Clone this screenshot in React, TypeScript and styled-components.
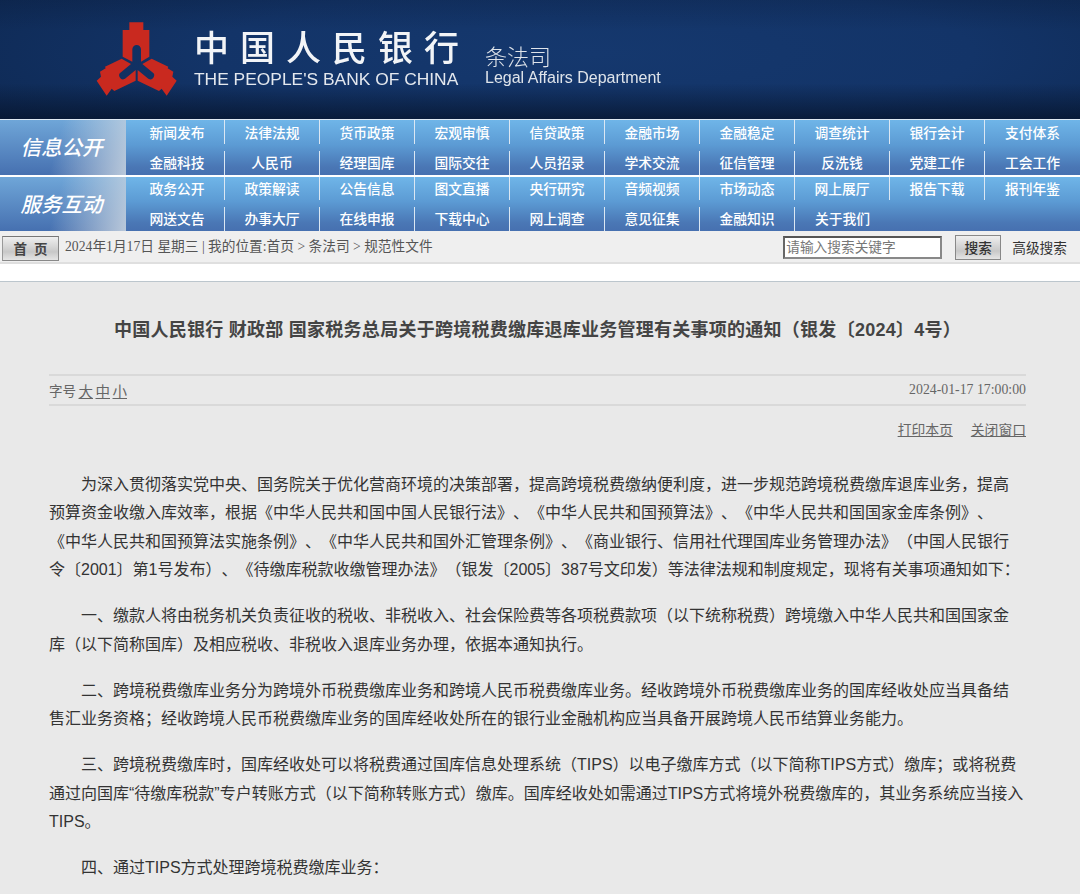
import React from "react";
import styled, { createGlobalStyle } from "styled-components";

const SANS = `"Liberation Sans", "Noto Sans CJK SC", sans-serif`;
const CJK = `"Noto Sans CJK SC", sans-serif`;

const Global = createGlobalStyle`
  html, body { margin: 0; padding: 0; background: #e9e9e9; }
  body { font-family: "Liberation Serif", "Noto Sans CJK SC", serif; overflow: hidden; height: 894px; text-spacing-trim: space-all; }
  * { box-sizing: border-box; }
`;
const Page = styled.div`width: 1080px; height: 894px; overflow: hidden; display: flex; flex-direction: column; background: #fff;`;
const Banner = styled.header`
  height: 120px; display: flex; align-items: flex-start; padding: 10px 0 0 85px; flex: none;
  border-bottom: 1px solid #dfe9f3;
  background:
    linear-gradient(rgba(8,22,48,.22) 0%, rgba(8,22,48,0) 25%, rgba(8,22,48,0) 70%, rgba(6,20,44,.75) 100%),
    radial-gradient(ellipse 70% 120% at 55% 45%, #15386e 0%, #133468 50%, #0f2b57 85%, #0d264d 100%);
`;
const Logo = styled.svg`width: 110px; height: 90px; flex: none; filter: blur(.4px);`;
const BankName = styled.div`margin: 17px 0 0 -1px; width: 270px; color: #f2f4f7; filter: blur(.35px);`;
const BankCn = styled.div`
  font-family: ${CJK}; font-weight: 500; font-size: 35px; line-height: 38px;
  letter-spacing: 11px; white-space: nowrap; height: 38px;
`;
const BankEn = styled.div`font-family: "Liberation Sans", sans-serif; font-size: 17.4px; line-height: 20px; white-space: nowrap; color: #e4e8ee; margin-top: 4px;`;
const Dept = styled.div`margin: 32px 0 0 21px; color: #dfe4ea; filter: blur(.3px);`;
const DeptCn = styled.div`font-family: ${CJK}; font-size: 22px; line-height: 26px; font-weight: 300;`;
const DeptEn = styled.div`font-family: "Liberation Sans", sans-serif; font-size: 16px; line-height: 20px; white-space: nowrap;`;
const NavBand = styled.nav<{ $last?: boolean }>`
  height: ${p => (p.$last ? "54px" : "55px")}; flex: none; display: flex; margin-bottom: ${p => (p.$last ? "0" : "2px")};
  background: linear-gradient(#6fb5e8 0%, #5c9bd4 45%, #4a77b5 85%, #4670b0 100%);
`;
const NavTitle = styled.div`
  width: 126px; flex: none; margin-right: 4px; padding: 0 3px 3px 0; display: flex; align-items: center; justify-content: center;
  background: linear-gradient(105deg, rgba(70,120,180,0) 45%, rgba(205,215,225,.85) 100%), linear-gradient(#6fa6d8, #4670b0);
  color: #fff; font-family: ${CJK}; font-style: italic; font-size: 20.5px; font-weight: 500;
`;
const NavGrid = styled.div<{ $last?: boolean }>`
  flex: 1; display: grid; grid-template-columns: repeat(10, 1fr);
  grid-template-rows: ${p => (p.$last ? "30px 24px" : "31px 24px")};
`;
const NavCell = styled.a<{ $second?: boolean; $short?: boolean; $noLine?: boolean }>`
  display: block; text-align: center; color: #fff;
  font-family: ${CJK}; font-weight: 500; font-size: 13.8px; line-height: ${p => (p.$second ? "23px" : "24px")}; white-space: nowrap;
  height: ${p => (p.$short ? "23px" : "24px")};
  align-self: ${p => (p.$second ? "end" : "start")};
  ${p => (p.$short ? "line-height: 22px;" : "")}
  border-right: ${p => (p.$noLine ? "none" : "1px solid #dbe7f3")};
`;
const Crumb = styled.div`
  height: 33px; flex: none; background: #efefef; border-bottom: 2px solid #dfdfdf; display: flex; align-items: flex-start;
  padding: 5px 13px 0 2px; color: #555; font-size: 13.7px;
`;
const HomeBtn = styled.button`
  width: 57px; height: 25px; padding: 0; border: 1px solid #888; border-top-color: #777; border-left-color: #999;
  background: linear-gradient(#efefef, #c8c8c8 65%, #e5e5e5);
  font-family: ${CJK}; font-weight: 700; font-size: 13.5px; line-height: 21px; letter-spacing: 7px; text-indent: 7px; color: #444; margin-right: 6px;
`;
const CrumbText = styled.span`flex: 1; white-space: nowrap; line-height: 22px;`;
const SearchInput = styled.div`
  width: 159px; height: 23px; margin-right: 13px; border: 2px solid #888; border-top-color: #555; border-left-color: #666; background: #fff;
  font-size: 13.7px; line-height: 19px; padding-left: 1px; color: #777;
`;
const SearchBtn = styled.button`
  width: 46px; height: 25px; margin: -1px 11px 0 0; padding: 0; border: 1px solid #888; background: linear-gradient(#efefef, #c8c8c8 65%, #e5e5e5);
  font-family: ${CJK}; font-size: 13.7px; line-height: 21px; font-weight: 500; color: #333;
`;
const Advanced = styled.span`font-family: ${CJK}; font-size: 13.7px; line-height: 22px; color: #333;`;
const WhiteGap = styled.div`height: 18px; background: #fff; flex: none; border-bottom: 1px solid #bcc6cd;`;
const Main = styled.main`flex: 1; background: #e9e9e9; padding: 0 54px 0 49px;`;
const Title = styled.h1`
  margin: 36px 0 0; height: 24px; text-align: center; font: 700 18px/24px ${SANS}; letter-spacing: .26px; color: #444; white-space: nowrap;
`;
const Meta = styled.div`
  margin-top: 32px; height: 32px; border-top: 2px solid #d9d9d9; border-bottom: 2px solid #d9d9d9; display: flex;
  align-items: center; justify-content: space-between; color: #666; font-size: 13.8px;
`;
const SizeLabel = styled.span`font-family: ${CJK}; font-size: 13.5px; display: flex; align-items: center;`;
const SizeLink = styled.u`font-size: 14.5px; margin-left: 2.5px;`;
const Tools = styled.div`margin-top: 13px; display: flex; justify-content: flex-end; gap: 18px; color: #666; font: 13.8px/20px ${CJK};`;
const ToolLink = styled.u``;
const Article = styled.article`margin-top: 31.5px; width: 975.5px;`;
const Para = styled.p`
  margin: 0 0 17.5px; text-indent: 32px; font: 400 16px/28.5px ${SANS}; color: #333; text-align: left;
`;

const rows = [
  ["信息公开", ["新闻发布","法律法规","货币政策","宏观审慎","信贷政策","金融市场","金融稳定","调查统计","银行会计","支付体系"], ["金融科技","人民币","经理国库","国际交往","人员招录","学术交流","征信管理","反洗钱","党建工作","工会工作"]],
  ["服务互动", ["政务公开","政策解读","公告信息","图文直播","央行研究","音频视频","市场动态","网上展厅","报告下载","报刊年鉴"], ["网送文告","办事大厅","在线申报","下载中心","网上调查","意见征集","金融知识","关于我们","",""]],
] as const;

const paras = [
  "为深入贯彻落实党中央、国务院关于优化营商环境的决策部署，提高跨境税费缴纳便利度，进一步规范跨境税费缴库退库业务，提高预算资金收缴入库效率，根据《中华人民共和国中国人民银行法》、《中华人民共和国预算法》、《中华人民共和国国家金库条例》、《中华人民共和国预算法实施条例》、《中华人民共和国外汇管理条例》、《商业银行、信用社代理国库业务管理办法》（中国人民银行令〔2001〕第1号发布）、《待缴库税款收缴管理办法》（银发〔2005〕387号文印发）等法律法规和制度规定，现将有关事项通知如下：",
  "一、缴款人将由税务机关负责征收的税收、非税收入、社会保险费等各项税费款项（以下统称税费）跨境缴入中华人民共和国国家金库（以下简称国库）及相应税收、非税收入退库业务办理，依据本通知执行。",
  "二、跨境税费缴库业务分为跨境外币税费缴库业务和跨境人民币税费缴库业务。经收跨境外币税费缴库业务的国库经收处应当具备结售汇业务资格；经收跨境人民币税费缴库业务的国库经收处所在的银行业金融机构应当具备开展跨境人民币结算业务能力。",
  "三、跨境税费缴库时，国库经收处可以将税费通过国库信息处理系统（TIPS）以电子缴库方式（以下简称TIPS方式）缴库；或将税费通过向国库“待缴库税款”专户转账方式（以下简称转账方式）缴库。国库经收处如需通过TIPS方式将境外税费缴库的，其业务系统应当接入TIPS。",
  "四、通过TIPS方式处理跨境税费缴库业务：",
];

const LEAF = "M110 146L138 162L108 187A11 11 0 0 0 120 206L152 180V212L88 243L80 236L65 257L35 212L48 200L45 185L62 175L60 170Z";

export default function App() {
  return (
    <Page>
      <Global />
      <Banner>
        <Logo viewBox="0 0 330 270">
          <path fill="#c9291f" d="M133 37H175V60H193V140L168 155V118A13 13 0 0 0 142 118V155L113 140V60H133Z" />
          <path fill="#c9291f" d={LEAF} />
          <path fill="#c9291f" transform="translate(310 0) scale(-1 1)" d={LEAF} />
        </Logo>
        <BankName>
          <BankCn>中国人民银行</BankCn>
          <BankEn>THE PEOPLE'S BANK OF CHINA</BankEn>
        </BankName>
        <Dept>
          <DeptCn>条法司</DeptCn>
          <DeptEn>Legal Affairs Department</DeptEn>
        </Dept>
      </Banner>
      {rows.map(([title, a, b], n) => (
        <NavBand key={title} $last={n === 1}>
          <NavTitle>{title}</NavTitle>
          <NavGrid $last={n === 1}>
            {a.map((t, i) => <NavCell key={t} $short={n === 1} $noLine={i === 9}>{t}</NavCell>)}
            {b.map((t, i) => <NavCell key={t + i} $second $noLine={!b[i + 1]}>{t}</NavCell>)}
          </NavGrid>
        </NavBand>
      ))}
      <Crumb>
        <HomeBtn>首页</HomeBtn>
        <CrumbText>2024年1月17日 星期三 | 我的位置:首页 &gt; 条法司 &gt; 规范性文件</CrumbText>
        <SearchInput>请输入搜索关键字</SearchInput>
        <SearchBtn>搜索</SearchBtn>
        <Advanced>高级搜索</Advanced>
      </Crumb>
      <WhiteGap />
      <Main>
        <Title>中国人民银行 财政部 国家税务总局关于跨境税费缴库退库业务管理有关事项的通知（银发〔2024〕4号）</Title>
        <Meta>
          <SizeLabel>字号<SizeLink>大</SizeLink><SizeLink>中</SizeLink><SizeLink>小</SizeLink></SizeLabel>
          <span>2024-01-17 17:00:00</span>
        </Meta>
        <Tools><ToolLink>打印本页</ToolLink><ToolLink>关闭窗口</ToolLink></Tools>
        <Article>{paras.map(p => <Para key={p}>{p}</Para>)}</Article>
      </Main>
    </Page>
  );
}
